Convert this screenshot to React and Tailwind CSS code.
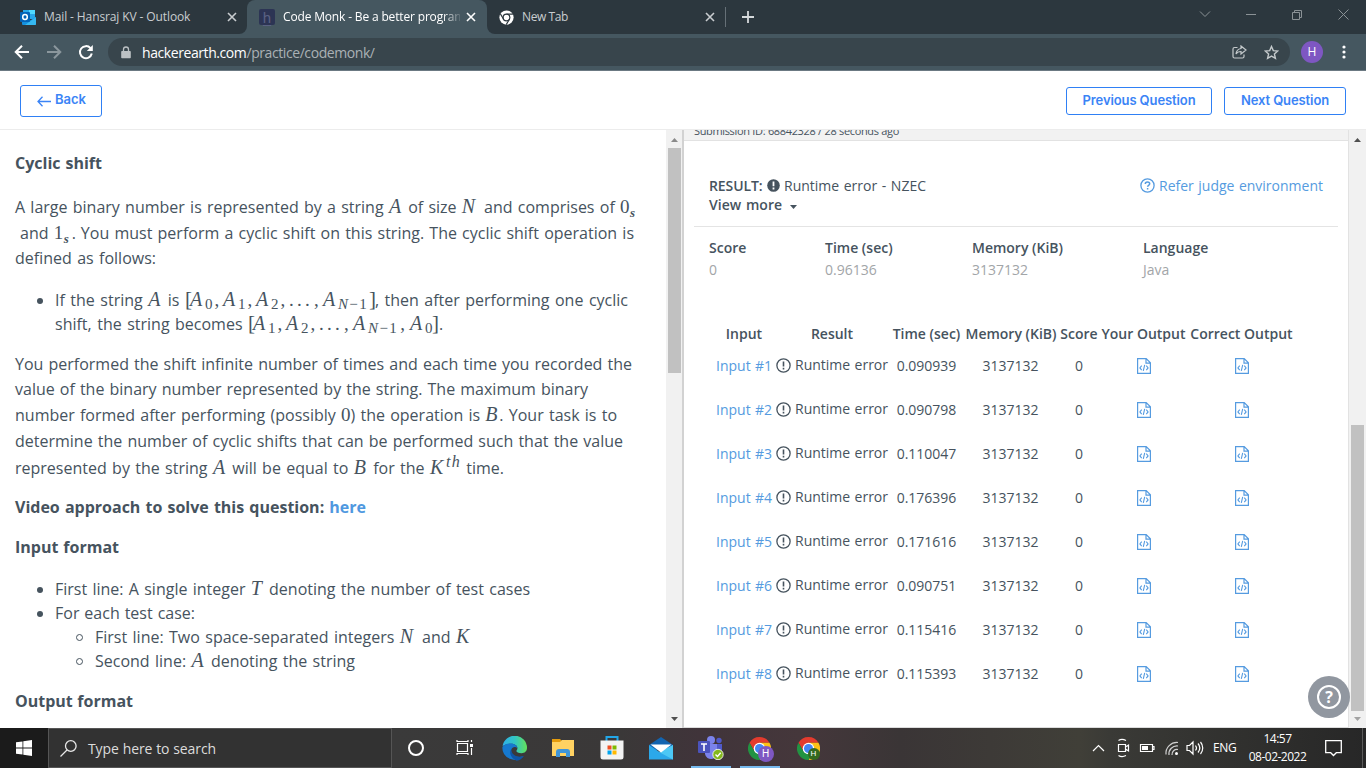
import React from "react";

const times = [
  "0.090939", "0.090798", "0.110047", "0.176396",
  "0.171616", "0.090751", "0.115416", "0.115393",
];

/* ---------- maths ---------- */
const V = ({ children, className = "" }) => (
  <span className={"inline-block font-['Liberation_Serif',serif] text-[20px] italic leading-none " + className}>{children}</span>
);
const Num = ({ children, className = "" }) => (
  <span className={"inline-block font-['Liberation_Serif',serif] text-[19px] leading-none " + className}>{children}</span>
);
const Bracket = ({ children, className = "" }) => (
  <span className={"inline-block font-['Liberation_Serif',serif] text-[21px] leading-none " + className}>{children}</span>
);
const Sub = ({ children }) => (
  <span className="inline-block align-[-3px] font-['Liberation_Serif',serif] text-[15px] leading-none">{children}</span>
);
const SmallS = () => (
  <span className="inline-block align-[-4px] font-['Liberation_Serif',serif] text-[13px] font-bold italic leading-none">s</span>
);
const Term = ({ sub, comma, className }) => (
  <span className={"inline-block text-left [text-align-last:left] " + className}>
    <V className="w-[15px]">A</V>
    <Sub>{sub}</Sub>
    {comma && <Num className="pl-[2px]">,</Num>}
  </span>
);
const NMinus1 = () => (
  <span className="tracking-[1.4px]"><i>N</i>−1</span>
);
const Dots = () => (
  <span className="inline-flex w-[34px] font-['Liberation_Serif',serif] text-[19px] leading-none">
    <span className="w-[8px]">.</span><span className="w-[8px]">.</span><span className="w-[9px]">.</span><span>,</span>
  </span>
);

const Line = ({ children, className = "" }) => (
  <div className={"whitespace-nowrap [text-align-last:justify] " + className}>{children}</div>
);

/* ---------- icons ---------- */
const Close = ({ className = "" }) => (
  <svg className={className} width="10" height="10" viewBox="0 0 10 10" stroke="currentColor" strokeWidth="1.6"><path d="M1 1l8 8M9 1l-8 8" /></svg>
);
const OutlookIcon = () => (
  <svg width="16" height="16" viewBox="0 0 16 16">
    <path d="M3 1h6v7H3z" fill="#0078d4" /><path d="M9 1h6v4H9z" fill="#50d9ff" /><path d="M3 1h6v3H3z" fill="#28a8ea" /><path d="M9 5h6v5H9z" fill="#28a8ea" />
    <path d="M2 9l7 3 7-4v7a1 1 0 0 1-1 1H3a1 1 0 0 1-1-1z" fill="#1490df" /><path d="M16 8v7a1 1 0 0 1-1 1H5z" fill="#35b8f1" />
    <rect x="0" y="3" width="10" height="10" rx="1" fill="#0364b8" />
    <ellipse cx="5" cy="8" rx="2.3" ry="2.5" fill="none" stroke="#fff" strokeWidth="1.5" />
  </svg>
);
const ChromeMono = () => (
  <svg width="15" height="15" viewBox="0 0 16 16">
    <circle cx="8" cy="8" r="7.6" fill="#fff" /><circle cx="8" cy="8" r="3.6" fill="#fff" stroke="#2c373e" strokeWidth="1.3" />
    <path d="M8 4.4h6.8M4.9 9.8L1.5 4.1M11.1 9.8L7.7 15.6" stroke="#2c373e" strokeWidth="1.2" />
  </svg>
);
const ChromeColor = ({ badge }) => (
  <span className="relative block h-6 w-6">
    <svg width="23" height="23" viewBox="0 0 24 24">
      <path d="M12 0a12 12 0 0 1 10.4 6H12L6.8 15 1.6 6A12 12 0 0 1 12 0z" fill="#e33b2e" />
      <path d="M22.4 6A12 12 0 0 1 12 24l5.2-9L17 9l-5-3z" fill="#fbc116" />
      <path d="M1.6 6A12 12 0 0 0 12 24l5.2-9H6.8z" fill="#229342" />
      <circle cx="12" cy="12" r="6" fill="#fff" /><circle cx="12" cy="12" r="4.7" fill="#4485f4" />
    </svg>
    <span className={"absolute flex items-center justify-center rounded-full font-['Liberation_Sans',sans-serif] leading-none text-white " + badge}>H</span>
  </span>
);
const BangIcon = () => (
  <svg className="shrink-0" width="15" height="15" viewBox="0 0 15 15" fill="none" stroke="#46535e">
    <circle cx="7.5" cy="7.5" r="6.6" strokeWidth="1.3" /><path d="M7.5 3.6v5M7.5 9.8v1.6" strokeWidth="1.6" />
  </svg>
);
const CodeFile = () => (
  <svg width="14" height="16" viewBox="0 0 14 16" fill="none" stroke="#559be0" strokeWidth="1.2">
    <path d="M.6.6h8.6l4.2 4.2v10.6H.6zM9 .8v4.4h4.2" /><path d="M4.7 7.6L2.900 9.900l1.800 2.300M9.300 7.600l1.800 2.300-1.800 2.300M7.700 6.900l-1.400 6" strokeWidth="1.1" />
  </svg>
);

/* ---------- browser chrome ---------- */
function TabStrip() {
  return (
    <div className="flex h-[34px] bg-[#455760] text-[12px] text-[#c9cdd0]">
      <div className="flex w-[247px] items-center rounded-br-lg bg-[#2c373e] pl-[20px]">
        <OutlookIcon />
        <span className="ml-[8px] w-[183px] whitespace-nowrap tracking-[-0.11px]">Mail - Hansraj KV - Outlook</span>
        <Close />
      </div>
      <div className="w-[240px] bg-[#2c373e]">
        <div className="flex h-full items-center rounded-t-lg bg-[#455760] pl-[12px] text-white">
          <span className="flex h-4 w-4 items-center justify-center rounded-[2px] bg-[#2c3454] font-['Lato',sans-serif] text-[15px] leading-none text-[#5a6182] underline underline-offset-2">h</span>
          <span className="ml-[8px] w-[177px] overflow-hidden whitespace-nowrap tracking-[-0.16px] [mask-image:linear-gradient(to_right,#000_160px,transparent_180px)]">Code Monk - Be a better program</span>
          <Close className="ml-[6px]" />
        </div>
      </div>
      <div className="flex flex-1 rounded-bl-lg bg-[#2c373e]">
        <div className="flex w-[238px] items-center pl-[12px]">
          <ChromeMono />
          <span className="ml-[8px] w-[183px] tracking-[-0.4px]">New Tab</span>
          <Close />
        </div>
        <div className="mt-[7px] h-5 w-px bg-[#667077]" />
        <svg className="ml-[16px] mt-[11px]" width="12" height="12" viewBox="0 0 12 12" stroke="#d5d9db" strokeWidth="1.8"><path d="M6 0v12M0 6h12" /></svg>
        <svg className="ml-auto mt-[8px]" width="170" height="12" viewBox="-10 0 170 12" fill="none" stroke="#8b9296" strokeWidth="1">
          <path d="M-6 3.500l5 5L4 3.500" />
          <path d="M40 6.500h10M86.500 4.500h7v7h-7zM88.500 4.500v-2h7v7h-2M132.500 1.500l10 10M142.500 1.500l-10 10" />
        </svg>
      </div>
    </div>
  );
}

function Toolbar() {
  return (
    <div className="flex h-[37px] items-center border-b border-[#6b7982] bg-[#455760]">
      <svg className="ml-[14px]" width="90" height="16" viewBox="0 0 90 16" fill="none" strokeWidth="2">
        <path d="M15 8H2M8 1.700L1.700 8 8 14.300" stroke="#fff" />
        <path d="M33 8h13M40 1.700L46.300 8 40 14.300" stroke="#8b979d" />
        <path d="M76.500 4.200A6 6 0 1 0 77.800 9.500" stroke="#fff" /><path d="M78.800 1v6h-6z" fill="#fff" />
      </svg>
      <div className="ml-[4px] flex h-7 w-[1182px] items-center rounded-full bg-[#38454c] pl-[13px]">
        <svg width="10" height="13" viewBox="0 0 10 13"><path d="M1 5h8a.8.8 0 0 1 .8.800V11.500a.8.8 0 0 1-.8.800H1a.8.8 0 0 1-.8-.800V5.800A.8.8 0 0 1 1 5z" fill="#bcc1c4" /><path d="M2.500 5.500V3.500a2.500 2.500 0 0 1 5 0v2" fill="none" stroke="#bcc1c4" strokeWidth="1.300" /></svg>
        <span className="ml-[11px] whitespace-nowrap text-[14px] tracking-[-0.42px] text-[#aab1b5]"><span className="text-white">hackerearth.com</span>/practice/codemonk/</span>
        <svg className="ml-auto mr-[17px]" width="15" height="14" viewBox="0 0 15 14" fill="none" stroke="#c5cacc" strokeWidth="1.200"><path d="M5.500 2.500H2.500a1.500 1.500 0 0 0-1.500 1.500v7.500A1.500 1.500 0 0 0 2.500 13h8a1.500 1.500 0 0 0 1.500-1.500V9.500" /><path d="M9 1l5 4-5 4V6.500c-2.500 0-4 .8-5 2.500.3-3 2-5 5-5.500z" /></svg>
        <svg className="mr-[11px]" width="15" height="15" viewBox="0 0 15 15" fill="none" stroke="#c5cacc" strokeWidth="1.400"><path d="M7.500 1.500l1.800 4.100 4.500.400-3.400 3 1 4.400-3.900-2.300-3.900 2.300 1-4.400-3.400-3 4.500-.400z" /></svg>
      </div>
      <span className="ml-[11px] flex h-[22px] w-[22px] items-center justify-center rounded-full bg-[#7e57c2] text-[12px] text-white">H</span>
      <svg className="ml-[19px]" width="4" height="14" viewBox="0 0 4 14" fill="#fff"><circle cx="2" cy="2" r="1.600" /><circle cx="2" cy="7" r="1.600" /><circle cx="2" cy="12" r="1.600" /></svg>
    </div>
  );
}

function PageHeader() {
  const btn = "flex items-center justify-center rounded-[3px] border border-[#2f80f5] whitespace-nowrap";
  return (
    <div className="flex h-[59px] border-b border-[#ececec] bg-white pl-5 pr-5 font-['Inter',sans-serif] text-[13px] font-semibold text-[#3b84f6]">
      <div className={btn + " mt-[14px] h-8 w-[82px] pb-[3px] pl-px"}>
        <svg className="mr-[4px] mt-[3px]" width="14" height="11" viewBox="0 0 14 11" fill="none" stroke="currentColor" strokeWidth="1.300"><path d="M14 5.500H1M5.500.800L1 5.500l4.500 4.700" /></svg>
        Back
      </div>
      <div className={btn + " ml-auto mt-[16px] h-7 w-[146px] pb-px tracking-[-0.1px]"}>Previous Question</div>
      <div className={btn + " ml-[12px] mt-[16px] h-7 w-[122px] pb-px tracking-[-0.1px]"}>Next Question</div>
    </div>
  );
}

/* ---------- problem statement ---------- */
const Bullet = () => <span className="ml-[22px] mr-[12px] mt-[10px] h-[6px] w-[6px] shrink-0 rounded-full bg-[#46535e]" />;
const Ring = () => <span className="ml-[61px] mr-[12px] mt-[9px] h-[7px] w-[7px] shrink-0 rounded-full border border-[#46535e]" />;

function Problem() {
  return (
    <div className="h-full w-[666px] overflow-hidden pl-[15px] pt-[21px] text-[16px] leading-[25.6px] text-[#46535e]">
      <Line className="w-[87px] font-bold">Cyclic shift</Line>
      <div className="mt-[18.4px]">
        <Line className="h-[25.6px] w-[621px]">A large binary number is represented by a string <V className="w-[14px]">A</V> of size <V className="w-[17px]">N</V> and comprises of <span className="inline-block w-[16px] [text-align-last:left]"><Num className="w-[10px]">0</Num><SmallS /></span></Line>
        <Line className="ml-[5px] h-[25.6px] w-[614px]">and <span className="inline-block w-[22px] [text-align-last:left]"><Num className="w-[10px]">1</Num><SmallS /><span className="pl-[3px]">.</span></span> You must perform a cyclic shift on this string. The cyclic shift operation is</Line>
        <Line className="h-[25.6px] w-[141px]">defined as follows:</Line>
      </div>
      <div className="mt-[16px] leading-6">
        <div className="flex h-6"><Bullet /><Line className="w-[573px]">If the string <V className="w-[14px]">A</V> is <span className="inline-block h-6 w-[194px] [text-align-last:left]"><Bracket className="w-[5px]">[</Bracket><Term sub="0" comma className="w-[33px]" /><Term sub="1" comma className="w-[33px]" /><Term sub="2" comma className="w-[33px]" /><Dots /><Term sub={<NMinus1 />} className="w-[46px]" /><Bracket className="w-[6px]">]</Bracket>,</span> then after performing one cyclic</Line></div>
        <div className="h-6 pl-[40px]"><Line className="w-[388px]">shift, the string becomes <span className="inline-block h-6 w-[195px] [text-align-last:left]"><Bracket className="w-[5px]">[</Bracket><Term sub="1" comma className="w-[33px]" /><Term sub="2" comma className="w-[33px]" /><Dots /><Term sub={<NMinus1 />} comma className="w-[57px]" /><Term sub="0" className="w-[22px]" /><Bracket className="w-[7px]">]</Bracket>.</span></Line></div>
      </div>
      <div className="mt-[16px]">
        <Line className="h-[25.6px] w-[617px]">You performed the shift infinite number of times and each time you recorded the</Line>
        <Line className="h-[25.6px] w-[573px]">value of the binary number represented by the string. The maximum binary</Line>
        <Line className="h-[25.6px] w-[602px]">number formed after performing (possibly <span><Num>0</Num>)</span> the operation is <span><V className="w-[14px]">B</V>.</span> Your task is to</Line>
        <Line className="h-[25.6px] w-[608px]">determine the number of cyclic shifts that can be performed such that the value</Line>
        <Line className="h-[25.6px] w-[489px]">represented by the string <V className="w-[14px]">A</V> will be equal to <V className="w-[14px]">B</V> for the <span className="inline-block h-[20px] w-[31px] leading-[20px] [text-align-last:left]"><V className="w-[16px]">K</V><span className="inline-block h-[8px] align-[7px] font-['Liberation_Serif',serif] text-[16px] italic leading-none tracking-[1.5px]">th</span></span> time.</Line>
      </div>
      <Line className="mt-[15.6px] w-[351px] font-bold">Video approach to solve this question: <span className="text-[#4f98e0]">here</span></Line>
      <Line className="mt-[14.4px] w-[104px] font-bold">Input format</Line>
      <div className="mt-[16px] leading-6">
        <div className="flex h-6"><Bullet /><Line className="w-[475px]">First line: A single integer <V className="w-[13px]">T</V> denoting the number of test cases</Line></div>
        <div className="flex h-6"><Bullet /><Line className="w-[140px]">For each test case:</Line></div>
        <div className="flex h-6"><Ring /><Line className="w-[376px]">First line: Two space-separated integers <V className="w-[17px]">N</V> and <V className="w-[15px]">K</V></Line></div>
        <div className="flex h-6"><Ring /><Line className="w-[260px]">Second line: <V className="w-[14px]">A</V> denoting the string</Line></div>
      </div>
      <Line className="mt-[16px] w-[118px] font-bold">Output format</Line>
    </div>
  );
}

const Arrow = ({ down, className = "" }) => (
  <svg className={className} width="7" height="4" viewBox="0 0 7 4" fill="currentColor">{down ? <path d="M0 0h7L3.500 4z" /> : <path d="M0 4h7L3.500 0z" />}</svg>
);

/* ---------- results ---------- */
function Stat({ label, value, w }) {
  return (
    <div className={w}>
      <div className="font-semibold">{label}</div>
      <div className="text-[#a2a5a8]">{value}</div>
    </div>
  );
}

const cols = "grid grid-cols-[64px_114px_73px_96px_40px_89px_107px] whitespace-nowrap text-center";

function Results() {
  return (
    <div className="flex h-full flex-col border-b border-[#dcdcdc] text-[14px] leading-[22px] text-[#46535e]">
      <div className="flex h-[11px] shrink-0 items-end overflow-hidden border-b border-[#e2e2e2] bg-[#f2f2f2] pl-[10px]">
        <Line className="mb-[1px] w-[205px] text-[11px] leading-[16px] tracking-[-0.35px]">Submission ID: 68842328 / 28 seconds ago</Line>
      </div>
      <div className="ml-[25px] mt-[35px] flex w-[614px] items-start">
        <div>
          <div className="flex h-[19px] items-center">
            <span className="w-[58px] whitespace-nowrap font-semibold tracking-[-0.1px]">RESULT:</span>
            <svg className="mr-[4px]" width="13" height="13" viewBox="0 0 13 13"><circle cx="6.500" cy="6.500" r="6.300" fill="#46535e" /><path d="M6.500 2.500v4.800M6.500 8.600v1.800" stroke="#fff" strokeWidth="1.800" /></svg>
            <Line className="w-[142px]">Runtime error - NZEC</Line>
          </div>
          <div className="flex h-[19px] items-center"><Line className="w-[73px] font-semibold">View more</Line><Arrow down className="ml-[8px] mt-[4px]" /></div>
        </div>
        <div className="ml-auto flex h-[19px] items-center text-[#559be0]">
          <svg className="mr-[4px]" width="15" height="15" viewBox="0 0 15 15" fill="none" stroke="currentColor"><circle cx="7.500" cy="7.500" r="6.600" strokeWidth="1.300" /><path d="M5.300 5.900c0-1.300 1-2 2.200-2s2.200.700 2.200 1.900c0 1.500-2.100 1.600-2.100 3M7.600 10v1.400" strokeWidth="1.500" /></svg>
          <Line className="w-[164px]">Refer judge environment</Line>
        </div>
      </div>
      <div className="ml-[10px] mt-[12px] h-px w-[644px] bg-[#e4e4e4]" />
      <div className="ml-[25px] mt-[10px] flex whitespace-nowrap">
        <Stat w="w-[116px]" label="Score" value="0" />
        <Stat w="w-[147px]" label="Time (sec)" value="0.96136" />
        <Stat w="w-[171px]" label="Memory (KiB)" value="3137132" />
        <Stat w="w-[100px]" label="Language" value="Java" />
      </div>
      <div className={cols + " ml-[28px] mt-[42px] font-semibold"}>
        <span>Input</span><span className="pr-[2px]">Result</span><span>Time (sec)</span><span>Memory (KiB)</span><span>Score</span><span>Your Output</span><span>Correct Output</span>
      </div>
      <div className="ml-[28px] mt-[10px]">
        {times.map((t, i) => (
          <div key={i} className={cols + " h-[44px]"}>
            <Line className="ml-[4px] w-[56px] text-[#559be0]">Input #{i + 1}</Line>
            <span className="flex h-[20px] items-center"><BangIcon /><Line className="ml-[4px] w-[93px]">Runtime error</Line></span>
            <span>{t}</span><span className="pr-px">3137132</span><span>0</span>
            <span className="flex h-[21px] items-center justify-center"><CodeFile /></span>
            <span className="flex h-[21px] items-center justify-center"><CodeFile /></span>
          </div>
        ))}
      </div>
    </div>
  );
}

/* ---------- taskbar ---------- */
function Taskbar() {
  return (
    <div className="flex h-10 items-stretch bg-[linear-gradient(to_right,#1b1b1b_0px,#1b1b1b_48px,#3a3a3a_392px,#3a3838_620px,#40343a_700px,#45373b_800px,#3a3536_900px,#403f38_1080px,#3a3a36_1110px,#272727_1366px)] text-white">
      <div className="flex w-12 items-center justify-center">
        <svg width="16" height="16" viewBox="0 0 16 16" fill="#fff"><path d="M0 2.300l6.500-.9v6.200H0zM7.300 1.300L16 0v7.600H7.300zM0 8.400h6.500v6.200L0 13.700zM7.300 8.400H16V16l-8.700-1.300z" /></svg>
      </div>
      <div className="flex w-[344px] items-center border border-[#555] bg-[#323232]">
        <svg className="ml-[11px]" width="17" height="17" viewBox="0 0 17 17" fill="none" stroke="#e8e8e8" strokeWidth="1.300"><circle cx="10.800" cy="6" r="5.300" /><path d="M7 10L.500 16.500" /></svg>
        <Line className="ml-[11px] w-[128px] text-[14px] tracking-[-0.1px] text-[#dcdcdc]">Type here to search</Line>
      </div>
      <div className="flex w-12 items-center justify-center"><span className="h-4 w-4 rounded-full border-2 border-white" /></div>
      <div className="flex w-12 items-center justify-center pb-[2px]">
        <svg width="17" height="15" viewBox="0 0 17 15" fill="none" stroke="#fff" strokeWidth="1.200"><path d="M1.500 3.500h10v8h-10zM1 0v1.500h11V0M1 15v-1.500h11V15M15.500 0v2M15.500 8v7" /><path d="M14 4h3v3h-3z" fill="#fff" stroke="none" /></svg>
      </div>
      <div className="ml-[2px] flex w-12 items-center justify-center">
        <svg width="25" height="25" viewBox="0 0 24 24">
          <defs><linearGradient id="e1" x1="0" x2="1"><stop offset="0" stopColor="#2fb0e8" /><stop offset=".5" stopColor="#32c5c4" /><stop offset="1" stopColor="#63e25a" /></linearGradient></defs>
          <path d="M.500 10A11.800 11.800 0 0 1 24 11.500c0 3-2.400 5-5.200 5-3 0-5-1.200-5-2.200 0-.6 1-.9 1-2.500C14.800 9 12 7.500 8.500 7.500S1.500 9 .500 10z" fill="url(#e1)" />
          <path d="M.300 11C1.500 8 5 7 8.500 7.200c3.500.100 6 2 6.300 4.500C13 9.800 9.500 10.500 8.800 13.500 8 18 13 21.500 20.500 19.500A11.900 11.900 0 0 1 .300 11z" fill="#1679cf" />
          <path d="M9 12.500C6.500 15.500 8 21 14 23.800c3-.4 5.500-2 7-4.600C15 21.500 8.500 18 9 12.500z" fill="#0f55a5" />
        </svg>
      </div>
      <div className="flex w-[49px] items-center justify-center">
        <svg width="22" height="19" viewBox="0 0 22 19"><path d="M0 0h8l2 2v3H0z" fill="#e59c0d" /><path d="M0 3h8l2-2h12v16H0z" fill="#ffd262" /><path d="M4 18v-5a3 3 0 0 1 3-3h8a3 3 0 0 1 3 3v5h-4v-4H8v4z" fill="#3f95d8" /></svg>
      </div>
      <div className="flex w-[49px] items-center justify-center">
        <svg width="24" height="24" viewBox="0 0 24 24"><path d="M6.500 5V1h11v4" fill="none" stroke="#22a7e8" strokeWidth="2" /><path d="M.500 4.500h23V21a2.500 2.500 0 0 1-2.500 2.500H3A2.500 2.500 0 0 1 .500 21z" fill="#f3f3f3" /><path d="M7.500 9.500h4v4h-4z" fill="#f04f23" /><path d="M12.500 9.500h4v4h-4z" fill="#7fba00" /><path d="M7.500 14.500h4v4h-4z" fill="#00a4ef" /><path d="M12.500 14.500h4v4h-4z" fill="#ffb900" /></svg>
      </div>
      <div className="flex w-[49px] items-center justify-center">
        <svg width="24" height="23" viewBox="0 0 24 23"><path d="M0 8L12 0l12 8v5H0z" fill="#1264b0" /><path d="M0 8l12 8 12-8v14.500H0z" fill="#2ba8ea" /><path d="M24 8v14.500L10 15z" fill="#4cc8f5" /><path d="M1.500 7.500h21L12 15.500z" fill="#fff" /></svg>
      </div>
      <div className="ml-px flex w-[49px] flex-col items-center">
        <svg className="mb-[6px] mt-[8px]" width="26" height="24" viewBox="0 0 26 24"><circle cx="13" cy="4" r="4" fill="#7b83eb" /><circle cx="21" cy="4.500" r="2.700" fill="#5059c9" /><path d="M16 8h8v7a5 5 0 0 1-6 4z" fill="#5059c9" /><path d="M7 8h12v8a6 6 0 0 1-12 2z" fill="#7b83eb" /><rect x="0" y="5" width="12" height="12" rx="1" fill="#4b53bc" /><path d="M3 8h6M6 8v7" stroke="#fff" strokeWidth="1.600" /><circle cx="20" cy="18.500" r="5.200" fill="#84b71c" stroke="#fff" strokeWidth=".8" /><path d="M17.500 18.500l2 2 3.200-3.700" fill="none" stroke="#fff" strokeWidth="1.400" /></svg>
        <span className="h-[2px] w-10 bg-[#76b9ed]" />
      </div>
      <div className="flex w-[49px] flex-col items-center">
        <span className="mt-[9px] block h-[29px]"><ChromeColor badge="left-[10px] top-[9px] h-4 w-4 bg-[#7e57c2] text-[10px]" /></span>
        <span className="h-[2px] w-10 bg-[#76b9ed]" />
      </div>
      <div className="flex w-[49px] flex-col items-center pt-[9px]"><ChromeColor badge="left-[11px] top-[11px] h-3 w-3 bg-[#33691e] text-[8px]" /></div>
      <svg className="ml-auto mt-[10px]" width="116" height="20" viewBox="0 0 116 20" fill="none" stroke="#fff" strokeWidth="1.200">
        <path d="M1 13l5.500-5.500L12 13" />
        <path d="M26.500 6.500h7v7h-7zM33.500 9l3-2v6l-3-2M26.500 2.500c2-1.300 5-1.300 7.500 0M26.500 17.500c2 1.300 5 1.300 7.500 0" />
        <path d="M48.500 6.500h12v7h-12zM60.500 8.500h1.500v3h-1.500" /><path d="M50 8h6v4h-6z" fill="#fff" stroke="none" />
        <path d="M74 16.500A11 11 0 0 1 86 4.500M77 17a8 8 0 0 1 9-9M80 17a5 5 0 0 1 6-5.500" stroke="#d0d0d0" /><circle cx="84.500" cy="15.500" r="1.500" fill="#fff" stroke="none" />
        <path d="M95 7.500h2.500l3.500-3.500v12L97.500 12.500H95zM103.500 7.500c1.200 1.500 1.200 3.500 0 5M106 5.500c2.200 2.700 2.200 6.300 0 9M108.500 4c3 3.500 3 8.500 0 12" />
      </svg>
      <span className="ml-[5px] w-[24px] self-center whitespace-nowrap text-[12px] tracking-[-0.4px]">ENG</span>
      <div className="ml-[10px] w-[61px] whitespace-nowrap pt-[2px] text-center text-[12px] leading-[18px] tracking-[-0.5px]"><div>14:57</div><div>08-02-2022</div></div>
      <svg className="ml-[17px] mr-[20px] mt-[12px] w-[17px]" height="17" viewBox="0 0 17 17" fill="none" stroke="#fff" strokeWidth="1.300"><path d="M.700.700h15.600v12h-5L8.500 15.500l-2.800-2.800h-5z" /></svg>
      <span className="mr-[3px] w-px bg-[#5a5a5a]" />
    </div>
  );
}

export default function App() {
  return (
    <div className="flex h-[768px] w-[1366px] flex-col overflow-hidden bg-white font-['Open_Sans','Noto_Sans',sans-serif]">
      <TabStrip />
      <Toolbar />
      <PageHeader />
      <div className="relative flex h-[598px]">
        <Problem />
        <div className="flex w-[16px] flex-col items-center bg-[#f1f1f1] pl-px pt-[8px] text-[#8a8a8a]">
          <Arrow />
          <div className="mt-[6px] h-[225px] w-[13px] bg-[#c1c1c1]" />
          <Arrow down className="mb-[7px] mt-auto text-[#505050]" />
        </div>
        <div className="w-[2px] bg-[#d2d2d2]" />
        <div className="w-[664px]"><Results /></div>
        <div className="flex w-[18px] flex-col items-center border-l border-[#e2e2e2] bg-[#f1f1f1] pt-[8px] text-[#505050]">
          <Arrow />
          <div className="mt-[283px] h-[286px] w-[13px] bg-[#c1c1c1]" />
          <Arrow down className="mb-[7px] mt-auto text-[#a3a3a3]" />
        </div>
        <div className="absolute left-[1308px] top-[546px] flex h-[42px] w-[42px] items-center justify-center rounded-full bg-[#9197a0]">
          <span className="flex h-6 w-6 items-center justify-center rounded-full border-2 border-white text-[16px] font-bold leading-none text-white">?</span>
        </div>
      </div>
      <Taskbar />
    </div>
  );
}
